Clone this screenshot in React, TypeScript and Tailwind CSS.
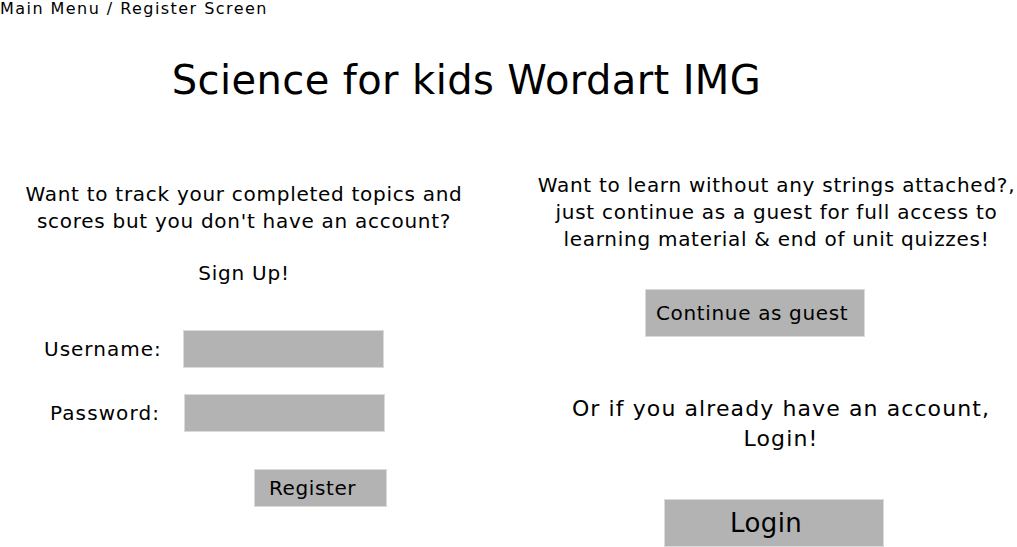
export default function App() {
  const font = { fontFamily: '"DejaVu Sans", Verdana, sans-serif' };
  return (
    <div className="w-[1017px] h-[547px] bg-white text-black overflow-hidden" style={font}>
      <div className="text-[16px] leading-[17px] tracking-[1.45px]">Main Menu / Register Screen</div>
      <div className="w-[933px] text-center text-[40px] leading-[48px] mt-[39px] tracking-[0.4px]">Science for kids Wordart IMG</div>
      <div className="flex mt-[58px]">
        <div className="w-[488px] flex flex-col items-center">
          <p className="text-[20px] leading-[27px] text-center mt-[19px] tracking-[0.72px]">
            Want to track your completed topics and<br />scores but you don't have an account?
          </p>
          <p className="text-[20px] leading-[27px] mt-[25px] tracking-[0.75px]">Sign Up!</p>
          <div className="self-stretch flex flex-col mt-[43px]">
            <div className="flex items-center">
              <span className="text-[20px] w-[183px] pl-[44px] tracking-[1px]">Username:</span>
              <div className="w-[201px] h-[38px] bg-[#b3b3b3] border border-[#dadada]" />
            </div>
            <div className="flex items-center mt-[26px]">
              <span className="text-[20px] w-[184px] pl-[50px] tracking-[1.1px]">Password:</span>
              <div className="w-[201px] h-[38px] bg-[#b3b3b3] border border-[#dadada]" />
            </div>
            <div className="flex mt-[37px] pl-[254px]">
              <div className="w-[133px] h-[38px] bg-[#b3b3b3] border border-[#dadada] text-[20px] leading-[36px] pl-[14px] tracking-[0.6px]">Register</div>
            </div>
          </div>
        </div>
        <div className="w-[481px] ml-[48px] flex flex-col items-center">
          <p className="text-[20px] leading-[27px] text-center mt-[10px] tracking-[0.72px]">
            Want to learn without any strings attached?,<br />just continue as a guest for full access to<br />learning material &amp; end of unit quizzes!
          </p>
          <div className="self-start ml-[109px] mt-[36px] w-[220px] h-[48px] bg-[#b3b3b3] border border-[#dadada] text-[20px] leading-[46px] pl-[10px] tracking-[0.65px]">Continue as guest</div>
          <p className="text-[22px] leading-[30px] text-center mt-[57px] pl-[9px] tracking-[1.1px]">
            Or if you already have an account,<br />Login!
          </p>
          <div className="self-start ml-[128px] mt-[45px] w-[220px] h-[48px] bg-[#b3b3b3] border border-[#dadada] text-[26px] leading-[46px] pl-[65px] tracking-[0.4px]">Login</div>
        </div>
      </div>
    </div>
  );
}
